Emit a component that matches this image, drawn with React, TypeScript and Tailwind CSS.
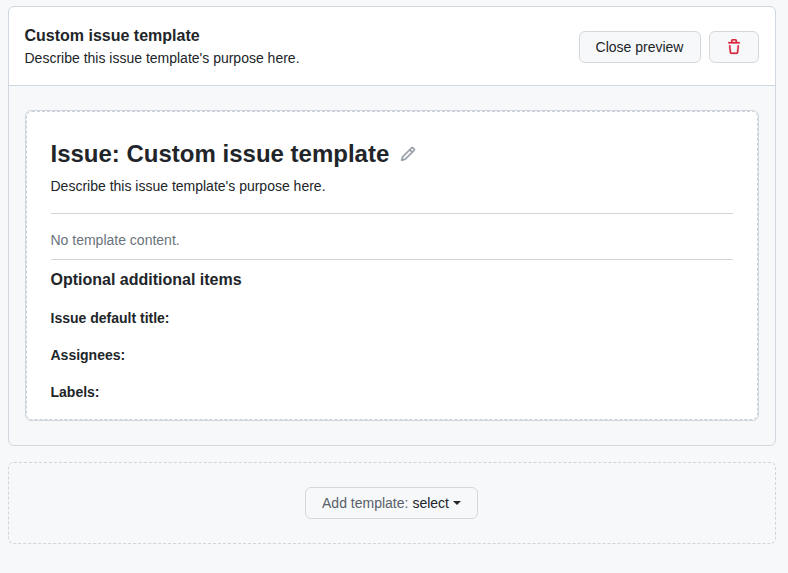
import React from "react";

function PencilIcon() {
  return (
    <svg
      width="16"
      height="16"
      viewBox="0 0 16 16"
      fill="currentColor"
      stroke="currentColor"
      strokeWidth="0.25"
      aria-hidden="true"
    >
      <path
        fillRule="evenodd"
        d="M11.013 1.427a1.75 1.75 0 012.474 0l1.086 1.086a1.75 1.75 0 010 2.474l-8.61 8.61c-.21.21-.47.364-.756.445l-3.251.93a.75.75 0 01-.927-.928l.929-3.25a1.75 1.75 0 01.445-.758l8.61-8.61zm1.414 1.06a.25.25 0 00-.354 0L10.811 3.75l1.439 1.44 1.263-1.263a.25.25 0 000-.354l-1.086-1.086zM11.189 6.25L9.75 4.81l-6.286 6.287a.25.25 0 00-.064.108l-.558 1.953 1.953-.558a.249.249 0 00.108-.064l6.286-6.286z"
      />
    </svg>
  );
}

function TrashIcon() {
  return (
    <svg
      width="16"
      height="16"
      viewBox="0 0 16 16"
      fill="currentColor"
      stroke="currentColor"
      strokeWidth="0.2"
      aria-hidden="true"
    >
      <path
        fillRule="evenodd"
        d="M6.5 1.75a.25.25 0 01.25-.25h2.5a.25.25 0 01.25.25V3h-3V1.75zm4.5 0V3h2.25a.75.75 0 010 1.5H2.75a.75.75 0 010-1.5H5V1.75C5 .784 5.784 0 6.75 0h2.5C10.216 0 11 .784 11 1.75zM4.496 6.675a.75.75 0 10-1.492.15l.66 6.6A1.75 1.75 0 005.405 15h5.19c.9 0 1.652-.681 1.741-1.576l.66-6.6a.75.75 0 00-1.492-.149l-.66 6.6a.25.25 0 01-.249.225h-5.19a.25.25 0 01-.249-.225l-.66-6.6z"
      />
    </svg>
  );
}

const fields = ["Issue default title:", "Assignees:", "Labels:"];

export default function App() {
  return (
    <main className="min-h-screen bg-[#f6f8fa] pt-1.5 pr-[12.5px] pl-[7.5px] font-['Liberation_Sans',Arial,sans-serif] text-sm leading-[21px] text-[#212529]">
      <section className="h-[440px] rounded-md border border-[#d0d7de]">
        <header className="flex h-[79px] items-start justify-between rounded-t-md border-b border-[#d0d7de] bg-white px-4 pt-4">
          <div className="pt-px">
            <h3 className="text-base leading-6 font-semibold">Custom issue template</h3>
            <p>Describe this issue template's purpose here.</p>
          </div>
          <div className="mt-2 flex gap-2">
            <button className="h-8 w-[122px] rounded-md border border-[#d5d8da] bg-[#f6f8fa]">
              Close preview
            </button>
            <button
              aria-label="Delete template"
              className="flex h-8 w-[50px] items-center justify-center rounded-md border border-[#d5d8da] bg-[#f6f8fa] text-[#d7263a]"
            >
              <TrashIcon />
            </button>
          </div>
        </header>

        <div className="mx-4 mt-6 rounded-md border border-[#d0d7de] bg-white">
          <div className="rounded-md border border-dashed border-[#cbd0d6] px-6 pt-6 pb-4">
            <div className="flex items-center gap-[11px]">
              <h1 className="text-2xl leading-9 font-semibold">Issue: Custom issue template</h1>
              <span className="text-[#959da5]">
                <PencilIcon />
              </span>
            </div>
            <p className="mt-1">Describe this issue template's purpose here.</p>
            <div className="mt-4 border-y border-[#d1d5da] pt-4 pb-2 text-[#6a737d]">
              No template content.
            </div>
            <h4 className="mt-2 text-base leading-6 font-semibold">Optional additional items</h4>
            <div className="mt-4 flex flex-col gap-4">
              {fields.map((field) => (
                <p key={field} className="font-semibold">
                  {field}
                </p>
              ))}
            </div>
          </div>
        </div>
      </section>

      <section className="mt-4 flex h-[82px] items-center justify-center rounded-md border border-dashed border-[#d1d5da]">
        <button className="flex h-8 w-[173px] items-center justify-center rounded-md border border-[#d5d8da] bg-[#f6f8fa]">
          <span className="text-[#586069]">Add template:</span>
          <span className="ml-1">select</span>
          <span className="ml-1 border-x-4 border-t-4 border-x-transparent border-t-[#24292e]" />
        </button>
      </section>
    </main>
  );
}
